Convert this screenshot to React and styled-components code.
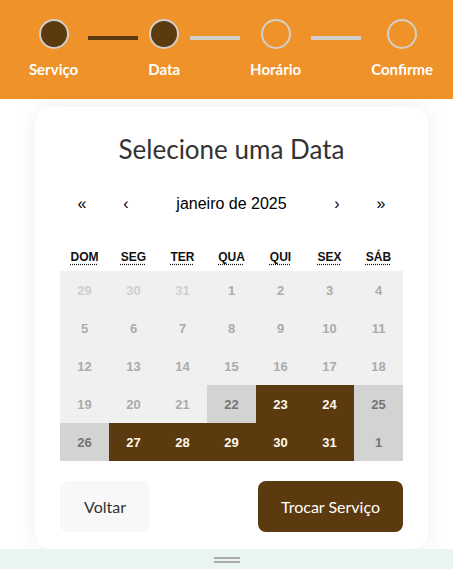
import React from "react";
import styled, { createGlobalStyle } from "styled-components";

const Global = createGlobalStyle`
  html, body { margin: 0; padding: 0; background: #ffffff; }
  body { font-family: "Liberation Sans", Arial, sans-serif; }
  * { box-sizing: border-box; }
`;

const DISPLAY = `Lato, "Open Sans", sans-serif`;

const Page = styled.div`
  width: 453px;
  height: 569px;
  display: flex;
  flex-direction: column;
  overflow: hidden;
`;

const Header = styled.header`
  height: 99px;
  background: #ee9229;
  display: flex;
  justify-content: center;
  align-items: flex-start;
  padding: 19px 0 0 9px;
  flex-shrink: 0;
`;

const Step = styled.div`
  display: flex;
  flex-direction: column;
  align-items: center;
`;

const Dot = styled.div`
  width: 30px;
  height: 30px;
  border-radius: 50%;
  border: 2.5px solid #d2cfca;
  background: ${(p) => (p.$done ? "#5c3a10" : "transparent")};
`;

const StepLabel = styled.span`
  margin-top: 11px;
  font-family: ${DISPLAY};
  font-weight: 700;
  font-size: 15px;
  line-height: 18px;
  color: #ffffff;
  white-space: nowrap;
`;

const Connector = styled.div`
  width: 50px;
  height: 4px;
  margin: 17px 10px 0;
  background: ${(p) => (p.$done ? "#5c3a10" : "#d2cfca")};
  flex-shrink: 0;
`;

const Card = styled.main`
  margin: 8px 25px 0 35px;
  height: 442px;
  background: #ffffff;
  border-radius: 16px;
  box-shadow: 0 0 22px rgba(0, 0, 0, 0.07);
  padding: 24px 25px 17px;
  display: flex;
  flex-direction: column;
  flex-shrink: 0;
`;

const Title = styled.h1`
  margin: 0;
  font-family: ${DISPLAY};
  font-weight: 400;
  font-size: 26px;
  line-height: 36px;
  color: #333333;
  text-align: center;
`;

const Nav = styled.div`
  margin-top: 15px;
  height: 44px;
  display: flex;
  align-items: center;
`;

const NavButton = styled.button`
  width: 44px;
  height: 44px;
  border: none;
  background: none;
  padding: 0;
  font-family: "Liberation Sans", Arial, sans-serif;
  font-size: 16px;
  color: #000000;
`;

const NavLabel = styled.span`
  flex: 1;
  text-align: center;
  font-family: "Liberation Sans", Arial, sans-serif;
  font-size: 16px;
  color: #000000;
`;

const Weekdays = styled.div`
  margin-top: 17px;
  height: 28px;
  display: grid;
  grid-template-columns: repeat(7, 1fr);
  align-items: center;
`;

const Weekday = styled.abbr`
  text-align: center;
  font-family: "Liberation Sans", Arial, sans-serif;
  font-weight: 700;
  font-size: 12px;
  color: #111111;
  text-decoration: underline dotted;
  text-underline-offset: 3px;
  justify-self: center;
`;

const Grid = styled.div`
  display: grid;
  grid-template-columns: repeat(7, 1fr);
  grid-auto-rows: 38px;
`;

const tileStyles = {
  neighbor: { bg: "#f0f0f0", fg: "#cfcfcf" },
  past: { bg: "#f0f0f0", fg: "#ababab" },
  off: { bg: "#d3d3d3", fg: "#757575" },
  open: { bg: "#5c3a10", fg: "#fff8ec" },
};

const Tile = styled.div`
  display: flex;
  align-items: center;
  justify-content: center;
  font-family: "Liberation Sans", Arial, sans-serif;
  font-weight: 700;
  font-size: 13px;
  background: ${(p) => tileStyles[p.$kind].bg};
  color: ${(p) => tileStyles[p.$kind].fg};
`;

const Actions = styled.div`
  margin-top: 20px;
  display: flex;
  justify-content: space-between;
`;

const Button = styled.button`
  height: 51px;
  border: none;
  border-radius: 8px;
  padding: 0;
  width: ${(p) => (p.$primary ? "145px" : "90px")};
  font-family: ${DISPLAY};
  font-size: 16px;
  background: ${(p) => (p.$primary ? "#5c3a10" : "#f8f8f8")};
  color: ${(p) => (p.$primary ? "#ffffff" : "#333333")};
`;

const BottomBar = styled.div`
  height: 20px;
  background: #e9f5f0;
  display: flex;
  flex-direction: column;
  align-items: center;
  justify-content: center;
  gap: 2px;
  padding-top: 2px;
  flex-shrink: 0;
`;

const Handle = styled.span`
  width: 26px;
  height: 2px;
  background: #aaaaaa;
`;

const steps = [
  { label: "Serviço", done: true },
  { label: "Data", done: true },
  { label: "Horário", done: false },
  { label: "Confirme", done: false },
];

const weekdays = ["DOM", "SEG", "TER", "QUA", "QUI", "SEX", "SÁB"];

const days = [
  ...[29, 30, 31].map((d) => ({ d, k: "neighbor" })),
  ...Array.from({ length: 21 }, (_, i) => ({ d: i + 1, k: "past" })),
  { d: 22, k: "off" },
  { d: 23, k: "open" },
  { d: 24, k: "open" },
  { d: 25, k: "off" },
  { d: 26, k: "off" },
  ...[27, 28, 29, 30, 31].map((d) => ({ d, k: "open" })),
  { d: 1, k: "off" },
];

export default function App() {
  return (
    <Page>
      <Global />
      <Header>
        {steps.map((s, i) => (
          <React.Fragment key={s.label}>
            {i > 0 && <Connector $done={i === 1} />}
            <Step>
              <Dot $done={s.done} />
              <StepLabel>{s.label}</StepLabel>
            </Step>
          </React.Fragment>
        ))}
      </Header>
      <Card>
        <Title>Selecione uma Data</Title>
        <Nav>
          <NavButton>«</NavButton>
          <NavButton>‹</NavButton>
          <NavLabel>janeiro de 2025</NavLabel>
          <NavButton>›</NavButton>
          <NavButton>»</NavButton>
        </Nav>
        <Weekdays>
          {weekdays.map((w) => (
            <Weekday key={w}>{w}</Weekday>
          ))}
        </Weekdays>
        <Grid>
          {days.map((t, i) => (
            <Tile key={i} $kind={t.k}>
              {t.d}
            </Tile>
          ))}
        </Grid>
        <Actions>
          <Button>Voltar</Button>
          <Button $primary>Trocar Serviço</Button>
        </Actions>
      </Card>
      <BottomBar>
        <Handle />
        <Handle />
      </BottomBar>
    </Page>
  );
}
